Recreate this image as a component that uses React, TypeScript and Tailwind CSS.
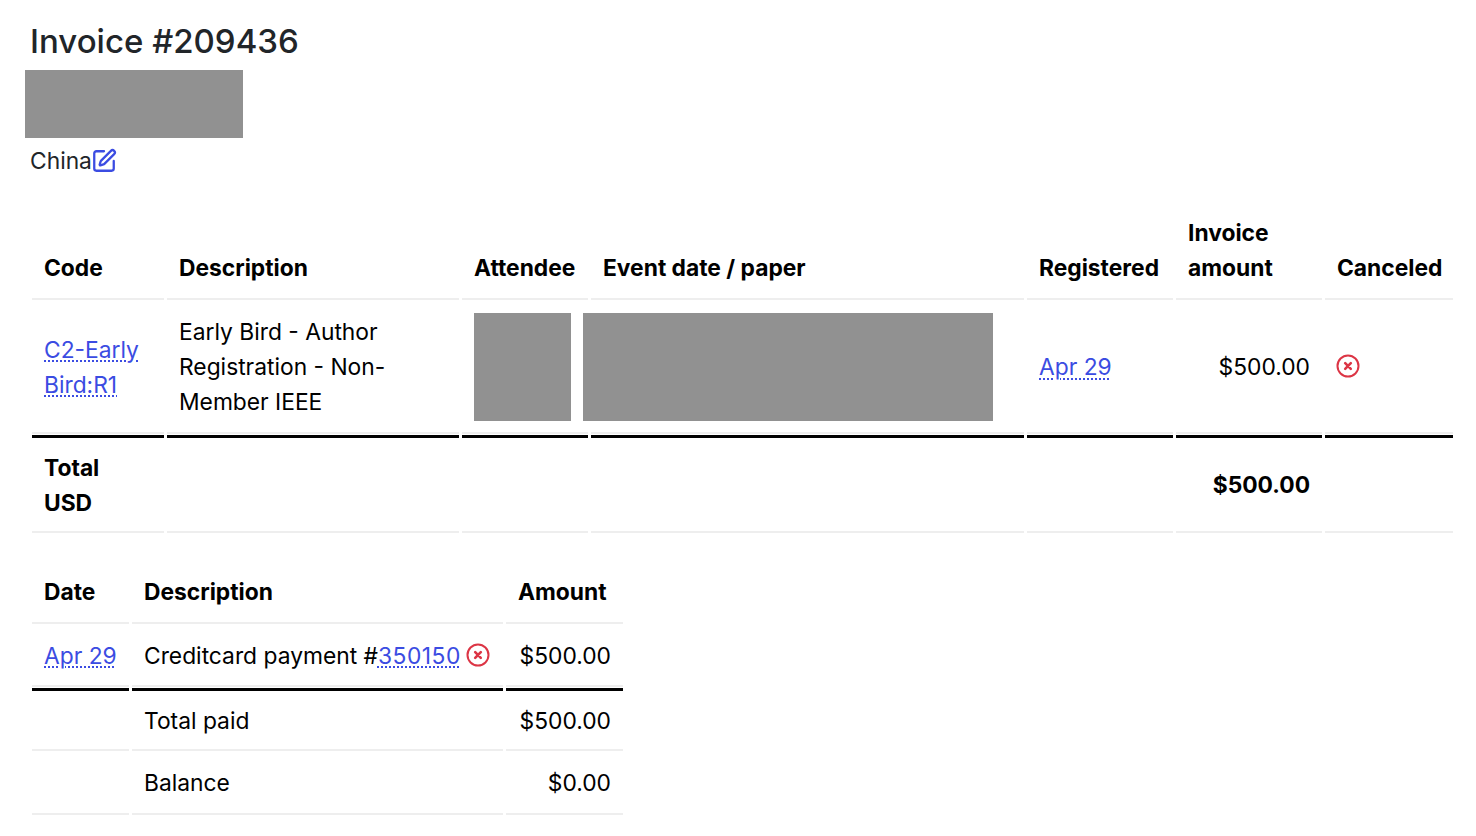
import { SquarePen } from "lucide-react";

const cell = "border-b-2 border-b-[#eeeeee] px-[12px]";
const total = "border-t-[3px] border-t-black";

function CancelIcon() {
  return (
    <svg width="24" height="24" viewBox="0 0 24 24" fill="none" stroke="#dc3545" strokeLinecap="round" className="-ml-px inline-block align-[-3px]">
      <circle cx="12" cy="12" r="10.5" strokeWidth="2" />
      <path d="M9.2 9.2l5.6 5.6M14.8 9.2l-5.6 5.6" strokeWidth="2.6" />
    </svg>
  );
}

function DottedLink({ children }: { children: React.ReactNode }) {
  return <a href="#" className="text-[#3b4ce2] underline decoration-dotted decoration-2 underline-offset-[3px]">{children}</a>;
}

function Redacted({ className }: { className: string }) {
  return <div className={"bg-[#919191] " + className} />;
}

export default function App() {
  return (
    <div className="relative h-[836px] overflow-hidden bg-white font-['Inter',sans-serif] text-[22.8px] leading-[35px] text-black">
      <div className="pl-[30px] pt-[18px] text-[#212529]">
        <h1 className="h-[52px] text-[33px] leading-[46px] font-medium">Invoice #209436</h1>
        <Redacted className="-ml-[5px] h-[68px] w-[218px]" />
        <div className="mt-[5px] flex items-center">
          China
          <SquarePen size={26} color="#3b4ce2" strokeWidth={2.1} className="-ml-[1px]" />
        </div>
      </div>

      <table className="mt-[36px] ml-[32px] w-[1421px] table-fixed border-separate border-spacing-x-[3px] border-spacing-y-[1px] -translate-x-[3px]">
        <colgroup>
          <col className="w-[132px]" />
          <col className="w-[292px]" />
          <col className="w-[126px]" />
          <col className="w-[433px]" />
          <col className="w-[146px]" />
          <col className="w-[146px]" />
          <col className="w-[128px]" />
        </colgroup>
        <thead>
          <tr className="text-left font-bold">
            <th className={cell + " h-[84px] pb-[13px] align-bottom whitespace-nowrap"}>Code</th>
            <th className={cell + " pb-[13px] align-bottom"}>Description</th>
            <th className={cell + " pb-[13px] align-bottom whitespace-nowrap"}>Attendee</th>
            <th className={cell + " pb-[13px] align-bottom"}>Event date / paper</th>
            <th className={cell + " pb-[13px] align-bottom whitespace-nowrap"}>Registered</th>
            <th className={cell + " pb-[13px] align-bottom"}>Invoice amount</th>
            <th className={cell + " pb-[13px] align-bottom whitespace-nowrap"}>Canceled</th>
          </tr>
        </thead>
        <tbody>
          <tr className="align-middle">
            <td className={cell + " h-[133px]"}>
              <DottedLink>C2-Early Bird:R1</DottedLink>
            </td>
            <td className={cell}>Early Bird - Author Registration - Non-Member IEEE</td>
            <td className={cell}>
              <Redacted className="h-[108px] w-[97px]" />
            </td>
            <td className={cell + " relative"}>
              <Redacted className="absolute top-[12px] -left-[8px] h-[108px] w-[410px]" />
            </td>
            <td className={cell}>
              <DottedLink>Apr 29</DottedLink>
            </td>
            <td className={cell + " text-right"}>$500.00</td>
            <td className={cell}>
              <CancelIcon />
            </td>
          </tr>
        </tbody>
        <tfoot>
          <tr className="align-middle font-bold">
            <td className={cell + " h-[98px] " + total}>Total USD</td>
            <td className={cell + " " + total} />
            <td className={cell + " " + total} />
            <td className={cell + " " + total} />
            <td className={cell + " " + total} />
            <td className={cell + " text-right " + total}>$500.00</td>
            <td className={cell + " " + total} />
          </tr>
        </tfoot>
      </table>

      <table className="mt-[25px] ml-[29px] w-[597px] table-fixed border-separate border-spacing-x-[3px] border-spacing-y-[1px]">
        <colgroup>
          <col className="w-[97px]" />
          <col className="w-[371px]" />
          <col className="w-[117px]" />
        </colgroup>
        <thead>
          <tr className="text-left font-bold">
            <th className={cell + " h-[64px]"}>Date</th>
            <th className={cell}>Description</th>
            <th className={cell}>Amount</th>
          </tr>
        </thead>
        <tbody>
          <tr className="align-middle">
            <td className={cell + " h-[62px] whitespace-nowrap"}>
              <DottedLink>Apr 29</DottedLink>
            </td>
            <td className={cell + " whitespace-nowrap"}>
              Creditcard payment #<DottedLink><span className="tracking-[0.5px]">350150</span></DottedLink> <CancelIcon />
            </td>
            <td className={cell + " text-right"}>$500.00</td>
          </tr>
          <tr className="align-middle">
            <td className={cell + " h-[63px] " + total} />
            <td className={cell + " " + total}>Total paid</td>
            <td className={cell + " text-right " + total}>$500.00</td>
          </tr>
          <tr className="align-middle">
            <td className={cell + " h-[63px]"} />
            <td className={cell}>Balance</td>
            <td className={cell + " text-right"}>$0.00</td>
          </tr>
        </tbody>
      </table>
    </div>
  );
}
